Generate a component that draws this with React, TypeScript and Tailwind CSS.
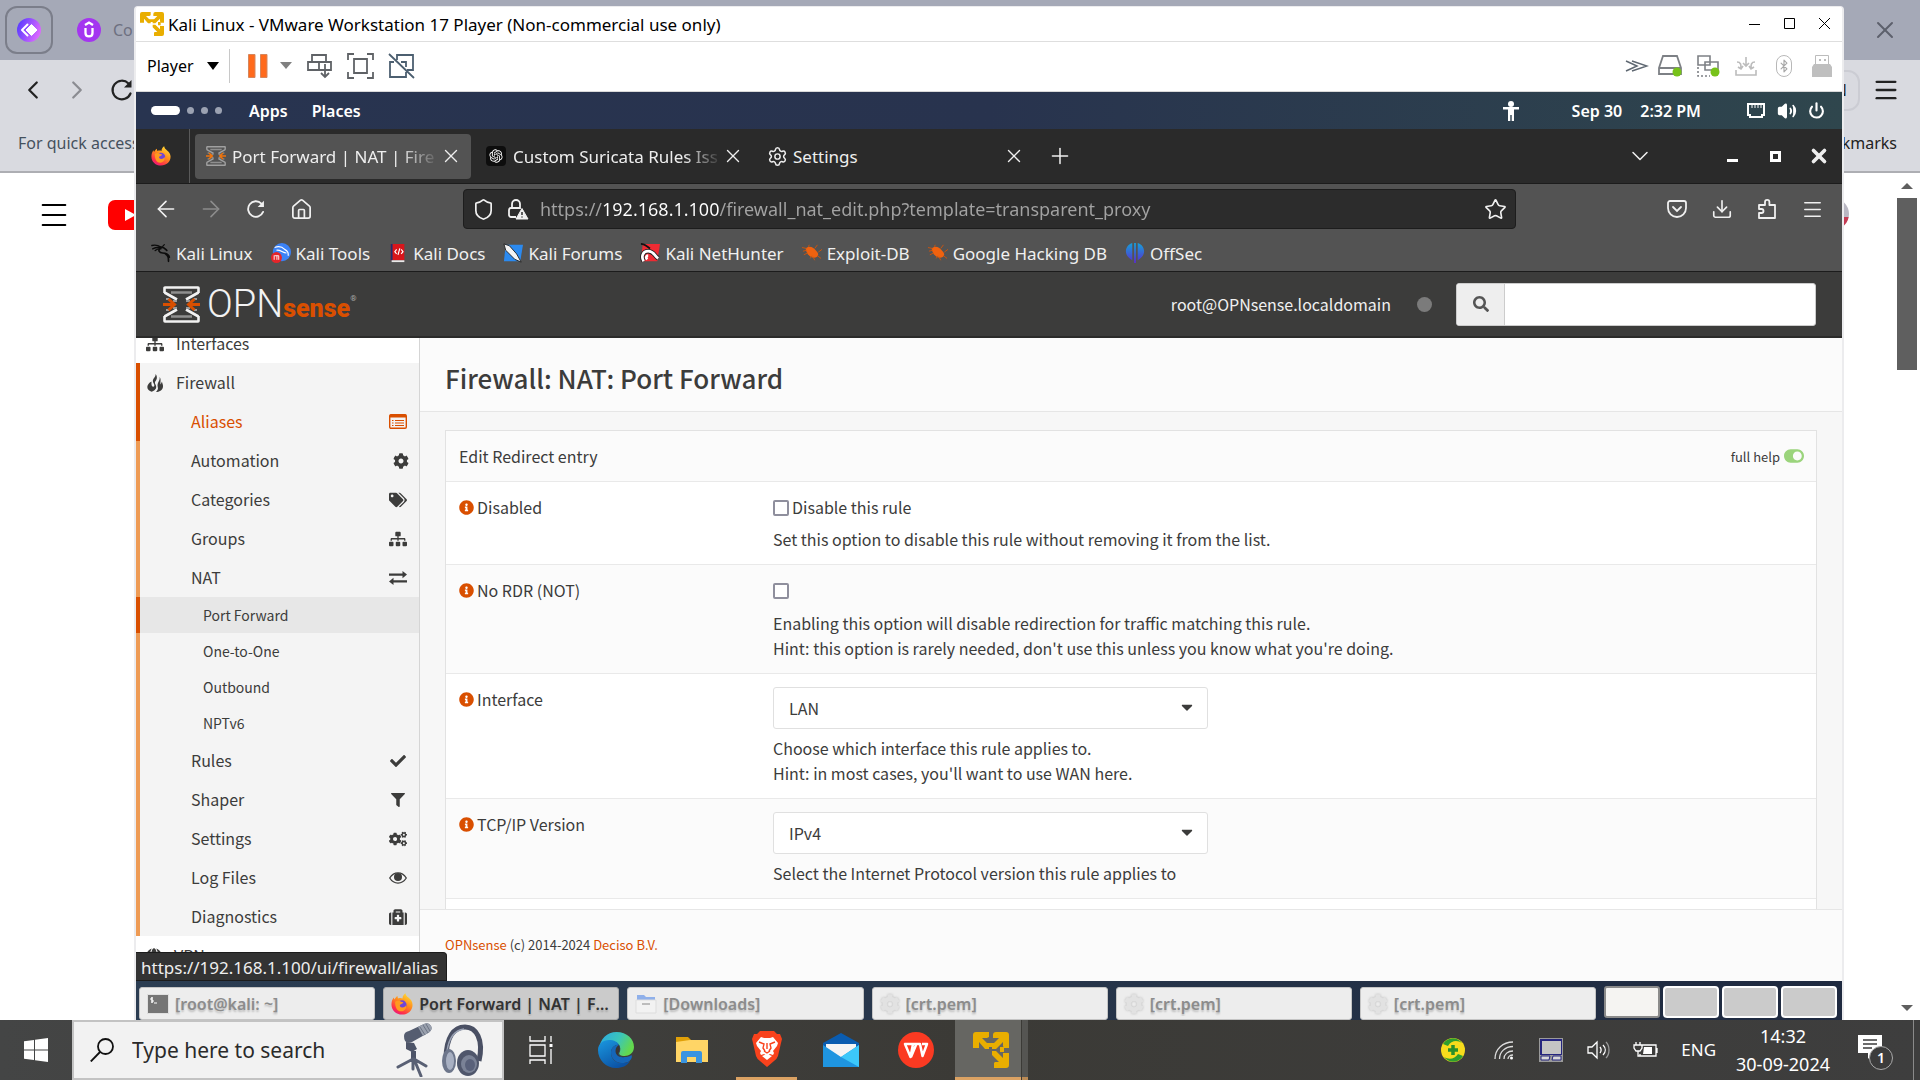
import React from "react";
import {
  FaSitemap, FaCog, FaTags, FaCheck, FaFilter, FaCogs, FaMedkit,
  FaInfoCircle, FaSearch, FaToggleOn, FaCaretDown, FaGlobe,
} from "react-icons/fa";
import { RiOpenaiFill } from "react-icons/ri";
import {
  X, Plus, ChevronDown, ChevronLeft, ChevronRight, ArrowLeft, ArrowRight, Menu,
  Shield, Star, Download, Settings, Power, Volume2, House, Bluetooth,
} from "lucide-react";

/* ---------- drawings ---------- */

function VmwareIcon({ className }: { className?: string }) {
  return (
    <svg viewBox="0 0 36 36" className={className} fill="#e9ae00">
      <path d="M0 3Q0 0 3 0H16V5L14 6H9L16 13V17H12L6 10V16H0z" />
      <path d="M20 3Q20 0 23 0H33Q36 0 36 3V16H31L30 14V10L23 17H19V13L26 6H20z" />
      <path d="M36 33Q36 36 33 36H21V31L22 30H26L19 23V19H23L30 26V21H36z" />
      <path d="M11 11h14v4H11zM27 15h4v5h-4z" />
    </svg>
  );
}

function FirefoxIcon({ className }: { className?: string }) {
  return (
    <svg viewBox="0 0 24 24" className={className}>
      <defs>
        <linearGradient id="ffa" x1="0.8" y1="0" x2="0.2" y2="1">
          <stop offset="0" stopColor="#ffe135" />
          <stop offset="0.45" stopColor="#ff8a1c" />
          <stop offset="0.8" stopColor="#ff2f4b" />
          <stop offset="1" stopColor="#e31587" />
        </linearGradient>
      </defs>
      <path d="M12 23.5C5.500 23.500.5 18.800.5 12.500.500 9.500 1.500 7 3 5l.6 2.200C4.600 5.400 6 4 7 3.300L7.600 6c2-.8 4-.6 5 0C12.500 3.500 14 1.500 15.800.300c.2 2.400 2 3.700 3.500 5 2.500 2 4.200 4.500 4.200 7.700 0 6-5 10.500-11.500 10.500z" fill="url(#ffa)" />
      <circle cx="12" cy="13" r="5" fill="#6e45d8" />
      <path d="M4.500 9.500c2-1.500 5-1.500 6.500 0l2.500.6c-.5 1.600-2.500 1.800-3.500 2.600-1 1 0 3 2.500 3 2 0 3.500-1.200 4-2.700.8 4-2 7-5.500 7-4 0-6.500-3.500-6.500-10.500z" fill="#ff9a1f" />
    </svg>
  );
}

function SenseMark({ className, light }: { className?: string; light?: boolean }) {
  const bar = light ? "#f2f2f2" : "#a0a0a0";
  const arrow = light ? "#d94f00" : "#f0740c";
  return (
    <svg viewBox="0 0 37 37" className={className} fill="none">
      <path d="M1.500 7V2Q1.500 1.500 2 1.500H35Q35.500 1.500 35.500 2V7M1.500 6.500L14 13.500M35.500 6.500L23 13.500" stroke={bar} strokeWidth="2.600" />
      <path d="M1.500 30V35Q1.500 35.500 2 35.500H35Q35.500 35.500 35.500 35V30M1.500 30.500L14 23.500M35.500 30.500L23 23.500" stroke={bar} strokeWidth="2.600" />
      <path d="M8 6.500h21M8 30.500h21" stroke="#8f8f8f" strokeWidth="2.500" />
      <path d="M3 13h3M31 13h3M3 24h3M31 24h3M10 15h4M23 15h4M10 22h4M23 22h4" stroke="#9a9a9a" strokeWidth="2" />
      <path d="M0 18.500h11M5.500 13l6 5.500-6 5.500M37 18.500H26M31.500 13l-6 5.500 6 5.500" stroke={arrow} strokeWidth="3" />
    </svg>
  );
}

function ReloadIcon({ className }: { className?: string }) {
  return (
    <svg viewBox="0 0 24 24" className={className} fill="none" stroke="currentColor" strokeWidth="2.200" strokeLinecap="round">
      <path d="M20.500 15.500A9.300 9.300 0 1118.500 5.500" />
      <path d="M21.500 2v7.500H14z" fill="currentColor" stroke="none" />
    </svg>
  );
}

function KaliDragon({ className, color }: { className?: string; color: string }) {
  return (
    <svg viewBox="0 0 24 24" className={className} fill="none" stroke={color} strokeLinecap="round">
      <path d="M1 3c4-1 8 0 11 2M2 7c4-2 7-2 10-1M5 9c2-2 4-2 7-2" strokeWidth="1.600" />
      <path d="M12 5c4 0 5 2 7 4M11 6c-3 3-1 6 3 6 4 0 7 1 8 5M17 13c4 2 4 5 4 9" strokeWidth="2" />
      <path d="M14 4l2-2" strokeWidth="1.500" />
    </svg>
  );
}

function EdgeIcon({ className }: { className?: string }) {
  return (
    <svg viewBox="0 0 36 36" className={className}>
      <defs>
        <linearGradient id="eda" x1="0" y1="0" x2="1" y2="0.4">
          <stop offset="0" stopColor="#2aa7e8" />
          <stop offset="0.6" stopColor="#3cc6b8" />
          <stop offset="1" stopColor="#63d84e" />
        </linearGradient>
        <linearGradient id="edb" x1="0" y1="0" x2="0.6" y2="1">
          <stop offset="0" stopColor="#1a98e0" />
          <stop offset="1" stopColor="#0b52a4" />
        </linearGradient>
      </defs>
      <path d="M1 17C2 7 9 0 18.500 0 29 0 36 7 36 15c0 6-5 9-9.500 9-4 0-6-1.500-5-3.500C24 16 21 9 13 9 7 9 2 12 1 17z" fill="url(#eda)" />
      <path d="M0 18c0-6 5-10 11-10 5 0 9 2 10 5-4-1-8 3-8 8 0 7 6 10 11 10 4 0 6-1 8-2-3 5-8 7-14 7C8 36 0 28 0 18z" fill="url(#edb)" />
      <path d="M13 21c0-5 4-9 8-8 1.500 3 1 6-.5 8-1 2 1 4 6 4 3 0 5-.5 7-2 1 2 0 4-2 6-2 1.500-5 2-8 2-5 0-10.500-4-10.500-10z" fill="#1566b8" />
      <path d="M21 13c1.500 3 1 6-.5 8-1 2 1 4 6 4-5 1-9-2-9-6 0-3 1.500-5 3.500-6z" fill="#3a3632" />
    </svg>
  );
}

function PemGear() {
  return <FaCog className="size-5 shrink-0 text-[#e2e2e2] drop-shadow-[0_0_1px_#bbb]" />;
}

function CloseX() {
  return <X className="size-[22px]" strokeWidth={1.5} />;
}

/* ---------- host browser behind the VM ---------- */

function HostBrowser() {
  return (
    <div className="flex h-full flex-col bg-white font-['Noto_Sans',sans-serif]">
      <div className="flex h-[60px] items-center justify-between bg-[#a5a9b7] pb-[1px] pl-[5px] pr-[21px]">
        <div className="flex items-center">
          <button aria-label="Pinned tab" className="flex size-12 items-center justify-center rounded-xl border-2 border-[#7b7e8a]">
            <svg viewBox="0 0 24 24" className="size-6">
              <defs>
                <linearGradient id="pin" x1="0" y1="0.3" x2="1" y2="0.7">
                  <stop offset="0" stopColor="#5a3bff" />
                  <stop offset="1" stopColor="#e46bff" />
                </linearGradient>
              </defs>
              <circle cx="12" cy="12" r="12" fill="url(#pin)" />
              <path d="M14.500 6.500L20 12l-5.500 5.500L9 12z" fill="#fff" stroke="#fff" strokeLinejoin="round" />
              <path d="M10.500 6.500L5 12l5.500 5.500" stroke="#fff" strokeWidth="2" fill="none" strokeLinecap="round" strokeLinejoin="round" />
            </svg>
          </button>
          <div className="ml-6 flex items-center gap-3 text-base text-[#6d7080]">
            <svg viewBox="0 0 24 24" className="size-6">
              <circle cx="12" cy="12" r="12" fill="#a435f0" />
              <path d="M8.500 10v5c0 4.500 7 4.500 7 0v-5M8 7l4-2.500L16 7" fill="none" stroke="#fff" strokeWidth="2.300" />
            </svg>
            <span>Co</span>
          </div>
        </div>
        <button aria-label="Close window"><X className="size-7 text-[#5d606c]" strokeWidth={1.7} /></button>
      </div>
      <div className="flex h-[113px] flex-col border-b-2 border-[#adaeb3] bg-[#d9dae0] text-[#45515e]">
        <div className="flex h-[60px] items-center justify-between pl-[18px] pr-[20px] text-[#222]">
          <div className="flex items-center gap-[14px]">
            <button aria-label="Back"><ChevronLeft className="size-[30px]" strokeWidth={1.8} /></button>
            <button aria-label="Forward"><ChevronRight className="size-[30px] text-[#8b8c92]" strokeWidth={1.8} /></button>
            <button aria-label="Reload"><ReloadIcon className="ml-1 size-6" /></button>
          </div>
          <div className="flex items-center gap-3">
            <div className="flex h-[41px] w-14 items-center justify-end rounded-xl border-2 border-[#cbccd3] pr-[11px] text-base">VPN</div>
            <button aria-label="Menu"><Menu className="size-[28px]" strokeWidth={2} /></button>
          </div>
        </div>
        <div className="flex h-[46px] items-center justify-between pl-[18px] pr-[23px] text-base">
          <span>For quick access</span>
          <span className="text-[#222]">All Bookmarks</span>
        </div>
      </div>
      <div className="flex min-h-0 flex-1 justify-between">
        <div className="flex h-[84px] items-center gap-[37px] pl-[37px]">
          <button aria-label="Guide"><Menu className="size-[34px] text-black" strokeWidth={1.4} /></button>
          <svg viewBox="0 0 42 30" className="h-[30px] w-[42px]">
            <rect width="42" height="30" rx="7" fill="#f00" />
            <path d="M17 9l11 6-11 6z" fill="#fff" />
          </svg>
        </div>
        <div className="flex">
          <div className="mr-[47px] mt-[25px] size-8 rounded-full bg-gradient-to-b from-[#b9b7c2] from-60% to-[#c33a52] to-60%" />
          <div className="flex w-[24px] flex-col items-center justify-between bg-white pb-[9px] pr-[3px] pt-[10px]">
            <div className="flex flex-col items-center gap-[9px]">
              <svg viewBox="0 0 12 6" className="h-[6px] w-3"><path d="M0 6l6-6 6 6z" fill="#5f5f5f" /></svg>
              <div className="h-[172px] w-5 bg-[#5f5f5f]" />
            </div>
            <svg viewBox="0 0 12 6" className="h-[6px] w-3"><path d="M0 0l6 6 6-6z" fill="#5f5f5f" /></svg>
          </div>
        </div>
      </div>
    </div>
  );
}

/* ---------- VMware chrome ---------- */

function VmTitleBar() {
  return (
    <div className="flex h-[35px] items-center justify-between border-b border-[#dedede] bg-white pl-1 pr-[11px] font-['Noto_Sans',sans-serif] text-black">
      <div className="flex items-center gap-1">
        <VmwareIcon className="size-6" />
        <span className="pt-[2px] text-[17px]">Kali Linux - VMware Workstation 17 Player (Non-commercial use only)</span>
      </div>
      <div className="flex items-center gap-[23px]">
        <button aria-label="Minimize"><svg viewBox="0 0 12 12" className="size-3"><path d="M0 6.500h11" stroke="#000" /></svg></button>
        <button aria-label="Maximize"><svg viewBox="0 0 12 12" className="size-3"><path d="M.5.500h10v10H.5z" stroke="#000" fill="none" /></svg></button>
        <button aria-label="Close"><svg viewBox="0 0 12 12" className="size-3"><path d="M0 0l11 11M11 0L0 11" stroke="#000" /></svg></button>
      </div>
    </div>
  );
}

function VmMenuBar() {
  return (
    <div className="flex h-[50px] items-center justify-between border-b border-[#d9d9d9] bg-white pb-[2px] pl-[11px] pr-2 font-['Noto_Sans',sans-serif] text-black">
      <div className="flex items-center">
        <button className="flex items-center gap-[13px] text-base">
          Player
          <svg viewBox="0 0 12 8" className="h-2 w-3"><path d="M0 0h12L6 8z" fill="#000" /></svg>
        </button>
        <div className="ml-[10px] h-[34px] w-px bg-[#c8c8c8]" />
        <div className="ml-[18px] flex items-center gap-3">
          <button aria-label="Pause"><svg viewBox="0 0 20 24" className="h-6 w-5"><path d="M.5.500h6.500v23H.5zM12.500.500H19v23h-6.500z" fill="#ff6a1c" stroke="#d5865c" /></svg></button>
          <button aria-label="Power options"><svg viewBox="0 0 12 7" className="h-[7px] w-3"><path d="M0 0h12L6 7z" fill="#808080" /></svg></button>
        </div>
        <div className="ml-[14px] flex items-center gap-[14px] text-[#5f6266]">
          <button aria-label="Send Ctrl+Alt+Del">
            <svg viewBox="0 0 27 26" className="h-[26px] w-[27px]" fill="none" stroke="currentColor" strokeWidth="1.800">
              <path d="M6 9V2h14v7M2 9h23v8H2zM13 9v8M19 11v13M15 20l4 4 4-4" />
            </svg>
          </button>
          <button aria-label="Full screen">
            <svg viewBox="0 0 27 26" className="h-[26px] w-[27px]" fill="none" stroke="currentColor" strokeWidth="1.800">
              <path d="M1 7V1h6M20 1h6v6M26 19v6h-6M7 25H1v-6M7 6h13v14H7z" />
            </svg>
          </button>
          <button aria-label="Unity mode">
            <svg viewBox="0 0 27 26" className="h-[26px] w-[27px]" fill="none" stroke="#4c5f70" strokeWidth="1.800">
              <path d="M9 7V2h16v15h-6M6 9H2v15h16v-5M13 9h5v5M1 1l25 24" />
            </svg>
          </button>
        </div>
      </div>
      <div className="flex items-center gap-[14px]">
        <svg viewBox="0 0 24 12" className="h-3 w-6" fill="none" stroke="#5f6872" strokeWidth="1.500"><path d="M1 1l11 5-11 5M7 1l15 5-15 5" /></svg>
        <svg viewBox="0 0 24 22" className="-ml-[5px] h-[22px] w-6" fill="none" stroke="#7d8085" strokeWidth="1.800">
          <path d="M5 1h14l4 12v6H1v-6zM1 13h22" /><circle cx="19" cy="17" r="4.500" fill="#77c21a" stroke="none" />
        </svg>
        <svg viewBox="0 0 24 22" className="h-[22px] w-6" fill="none" stroke="#7d8085" strokeWidth="1.600">
          <path d="M2 1h12v9H2zM9 7h13v8H9z" fill="#fff" /><path d="M2 12v9h12" strokeDasharray="2 2" /><circle cx="19" cy="17" r="4.500" fill="#77c21a" stroke="none" />
        </svg>
        <svg viewBox="0 0 22 20" className="h-5 w-6" fill="none" stroke="#bcbcbc" strokeWidth="1.600">
          <path d="M11 1v9M8 7l3 3 3-3M2 6c4 0 4 3 4 6M20 6c-4 0-4 3-4 6M3 11l3 2 2-3M19 11l-3 2-2-3M1 14v5h20v-5" />
        </svg>
        <div className="flex w-6 justify-center">
          <div className="flex h-[22px] w-4 items-center justify-center rounded-full border border-[#b8b8b8]"><Bluetooth className="size-[14px] text-[#a8a8a8]" /></div>
        </div>
        <svg viewBox="0 0 22 22" className="h-[22px] w-6"><path d="M4.500.500h13v10h-13z" fill="#fff" stroke="#bcbcbc" /><path d="M8 4h2v2H8zM13 4h2v2h-2z" fill="#bcbcbc" /><path d="M1 12l2-3h16l2 3v10H1z" fill="#bfbfbf" /></svg>
      </div>
    </div>
  );
}

/* ---------- Kali desktop ---------- */

function KaliTopPanel() {
  return (
    <div className="flex h-[37px] items-center justify-between bg-gradient-to-r from-[#283450] via-[#28334e] to-[#2f464d] pl-[15px] pr-[17px] font-['Noto_Sans',sans-serif] text-base font-semibold text-white">
      <div className="flex items-center">
        <div className="flex items-center gap-[7px]">
          <div className="h-[9px] w-[29px] rounded-full bg-white" />
          <div className="size-[7px] rounded-full bg-[#9ba2b2]" />
          <div className="size-[7px] rounded-full bg-[#9ba2b2]" />
          <div className="size-[7px] rounded-full bg-[#9ba2b2]" />
        </div>
        <button className="ml-[27px]">Apps</button>
        <button className="ml-6">Places</button>
      </div>
      <div className="flex items-center">
        <svg viewBox="0 0 16 20" className="h-5 w-4" fill="#fff"><circle cx="8" cy="3" r="3" /><path d="M0 6h16v2.500h-5V20H8.700v-6H7.300v6H5V8.500H0z" /></svg>
        <span className="ml-[53px]">Sep 30</span>
        <span className="ml-[18px]">2:32 PM</span>
        <svg viewBox="0 0 18 16" className="ml-[46px] h-4 w-[18px]" fill="none" stroke="#fff" strokeWidth="2"><path d="M1 1h16v11h-2v2H3v-2H1z" /><path d="M5 2v3M8 2v3M11 2v3M14 2v3" strokeWidth="1" /></svg>
        <Volume2 className="ml-[12px] size-[20px] fill-white" strokeWidth={2} />
        <Power className="ml-[11px] size-[17px]" strokeWidth={3} />
      </div>
    </div>
  );
}

function BrowserTabs() {
  return (
    <div className="flex h-[55px] items-center justify-between border-b border-[#1c1c1c] bg-[#2a2a2a] pr-3 text-[#eee]">
      <div className="flex h-full items-center">
        <div className="flex h-full w-[54px] items-center border-r border-[#5a5a5a] pl-[15px]"><FirefoxIcon className="size-5" /></div>
        <div className="ml-[5px] flex h-[45px] w-[276px] items-center rounded bg-[#535353] pl-[11px] pr-[9px]">
          <SenseMark className="size-5 shrink-0" />
          <span className="ml-[6px] min-w-0 flex-1 whitespace-nowrap pt-[2px] [mask-image:linear-gradient(to_right,black_80%,transparent)]">Port Forward | NAT | Fire</span>
          <button aria-label="Close tab"><CloseX /></button>
        </div>
        <div className="flex h-[45px] w-[282px] items-center pl-[15px] pr-[9px]">
          <span className="flex size-5 shrink-0 items-center justify-center rounded bg-[#0d0d0d]"><RiOpenaiFill className="size-4 text-white" /></span>
          <span className="ml-[7px] min-w-0 flex-1 whitespace-nowrap pt-[2px] [mask-image:linear-gradient(to_right,black_82%,transparent)]">Custom Suricata Rules Iss</span>
          <button aria-label="Close tab"><CloseX /></button>
        </div>
        <div className="flex h-[45px] w-[281px] items-center pl-[14px] pr-[9px]">
          <Settings className="size-[21px] shrink-0" strokeWidth={1.7} />
          <span className="ml-[5px] min-w-0 flex-1 pt-[2px]">Settings</span>
          <button aria-label="Close tab"><CloseX /></button>
        </div>
        <button aria-label="New tab" className="ml-[13px]"><Plus className="size-[26px]" strokeWidth={1.4} /></button>
      </div>
      <div className="flex items-center">
        <button aria-label="List tabs"><ChevronDown className="size-[28px]" strokeWidth={1.3} /></button>
        <button aria-label="Minimize" className="ml-[73px] mt-2 h-[3px] w-[11px] bg-white" />
        <button aria-label="Restore" className="ml-8 h-[11px] w-[11px] border-[3px] border-white" />
        <button aria-label="Close" className="ml-[27px]"><X className="size-[22px]" strokeWidth={4} /></button>
      </div>
    </div>
  );
}

function BrowserToolbar() {
  return (
    <div className="flex h-[50px] items-center justify-between bg-[#535353] pl-[17px] pr-[18px] text-[#f0f0f0]">
      <div className="flex items-center gap-[19px]">
        <button aria-label="Back"><ArrowLeft className="size-[26px]" strokeWidth={1.5} /></button>
        <button aria-label="Forward"><ArrowRight className="size-[26px] text-[#8c8c8c]" strokeWidth={1.5} /></button>
        <button aria-label="Reload" className="flex w-[26px] justify-center"><ReloadIcon className="size-5" /></button>
        <button aria-label="Home" className="flex w-[26px] justify-center"><House className="size-[23px]" strokeWidth={1.8} /></button>
      </div>
      <div className="ml-[149px] mr-[150px] flex h-10 flex-1 items-center rounded border border-[#1d1d1d] bg-[#2c2c2c] px-2">
        <Shield className="size-[23px]" strokeWidth={1.8} />
        <svg viewBox="0 0 22 22" className="ml-3 size-[22px]" fill="none" stroke="#f0f0f0" strokeWidth="1.800">
          <path d="M9 19H4a2 2 0 01-2-2v-5a2 2 0 012-2h9M5 10V6a4 4 0 018 0v5" />
          <path d="M15 10.500l6 10.500H9z" fill="#f0f0f0" strokeWidth="1" strokeLinejoin="round" /><path d="M15 14v3M15 18.500v1" stroke="#2c2c2c" strokeWidth="1.500" />
        </svg>
        <input
          aria-label="Address"
          defaultValue="https://192.168.1.100/firewall_nat_edit.php?template=transparent_proxy"
          className="ml-[11px] min-w-0 flex-1 bg-[linear-gradient(to_right,#a3a3a3_62px,#fff_62px,#fff_179px,#a3a3a3_179px)] bg-clip-text text-lg text-transparent outline-none"
        />
        <button aria-label="Bookmark this page"><Star className="size-[23px]" strokeWidth={1.7} /></button>
      </div>
      <div className="flex items-center gap-[23px]">
        <svg viewBox="0 0 22 22" className="size-[22px]" fill="none" stroke="currentColor" strokeWidth="1.800"><path d="M4 3h14a2 2 0 012 2v5a9 9 0 01-18 0V5a2 2 0 012-2z" /><path d="M7 9l4 4 4-4" strokeLinecap="round" /></svg>
        <Download className="size-[22px]" strokeWidth={1.8} />
        <svg viewBox="0 0 22 22" className="size-[22px]" fill="none" stroke="currentColor" strokeWidth="1.800" strokeLinejoin="round"><path d="M3 7h6V4a2.200 2.200 0 014.400 0v3H19v13H3v-5h2.500a2 2 0 000-4H3z" /></svg>
        <button aria-label="Open application menu"><Menu className="size-[23px]" strokeWidth={1.7} /></button>
      </div>
    </div>
  );
}

function BugIcon() {
  return (
    <svg viewBox="0 0 22 20" className="size-5" fill="#f0620f">
      <path d="M4 5c4-4 9-1 12 3 3 3 2 6-1 7-5 1-10-3-11-10z" />
      <path d="M0 4l5 1M2 12l4-2M7 3l1-2M14 18l-2-4M18 9l4-3M9 16l2-3M14 5l3-4M17 13l4 3M5 7L1 8" stroke="#d0550c" strokeWidth="1" />
    </svg>
  );
}

const bookmarks: { label: string; icon: React.ReactNode }[] = [
  { label: "Kali Linux", icon: <KaliDragon className="size-5" color="#0c0c0c" /> },
  {
    label: "Kali Tools",
    icon: (
      <svg viewBox="0 0 22 22" className="size-5"><circle cx="12" cy="10" r="10" fill="#3b82f6" /><path d="M4 5c5-2 9 0 11 2 4 2 4 4 4 7M6 8c4-1 7 3 11 3" stroke="#fff" fill="none" strokeWidth="1.300" /><circle cx="6" cy="16" r="6" fill="#e5252a" /><path d="M3.500 13.500v5M4 14h4.500v4.500M6.500 14v4.500" stroke="#fff" fill="none" /></svg>
    ),
  },
  {
    label: "Kali Docs",
    icon: (
      <svg viewBox="0 0 20 22" className="size-5"><path d="M2 1h15v18H2z" fill="#d8151b" /><path d="M2 1h2v18H2z" fill="#1d2f6f" /><path d="M3 19h14v2H3z" fill="#e9e9e9" /><path d="M8.500 7l-2 2.500 2 2.500M13.500 7l2 2.500-2 2.500M12 6l-2 7" stroke="#fff" fill="none" strokeWidth="1.300" /></svg>
    ),
  },
  {
    label: "Kali Forums",
    icon: (
      <svg viewBox="0 0 22 22" className="size-5"><path d="M3 2h19l-3 18H1z" fill="#2b8af0" /><path d="M1 1l6 2 8 9 5 9-7-3L3 8z" fill="#f4f4f4" stroke="#222" strokeWidth="1" /></svg>
    ),
  },
  {
    label: "Kali NetHunter",
    icon: (
      <svg viewBox="0 0 22 22" className="size-5"><path d="M3 1h19l-3 19H1z" fill="#ee2b33" /><path d="M4 20c-3-5-1-11 5-11 6 0 7 5 11 8" stroke="#222" strokeWidth="5" fill="none" /><path d="M4 20c-3-5-1-11 5-11 6 0 7 5 11 8M8 18c-2-2-1-4 1-4" stroke="#fff" strokeWidth="3" fill="none" /><path d="M1 1c4 0 7 3 10 5" stroke="#111" strokeWidth="2" fill="none" /></svg>
    ),
  },
  { label: "Exploit-DB", icon: <BugIcon /> },
  { label: "Google Hacking DB", icon: <BugIcon /> },
  {
    label: "OffSec",
    icon: (
      <svg viewBox="0 0 20 22" className="size-5">
        <defs><linearGradient id="off" x1="0" y1="0" x2="0" y2="1"><stop offset="0" stopColor="#15a0d8" /><stop offset="1" stopColor="#5b2bd0" /></linearGradient></defs>
        <path d="M7 0v19C3 17 0 13 0 9s3-8 7-9zM13 0v19c4-2 7-6 7-10s-3-8-7-9zM9 0h2v22H9z" fill="url(#off)" />
      </svg>
    ),
  },
];

function BookmarksBar() {
  return (
    <div className="flex h-[38px] items-center gap-[18px] border-b border-[#1c1c1c] bg-[#535353] pl-[15px] text-[#f0f0f0]">
      {bookmarks.map((b) => (
        <a key={b.label} href="#" className="flex items-center gap-[5px]">
          {b.icon}
          <span className="pt-[3px]">{b.label}</span>
        </a>
      ))}
    </div>
  );
}

/* ---------- OPNsense ---------- */

function FlameIcon() {
  return (
    <svg viewBox="0 0 16 18" className="h-[18px] w-4" fill="#3c3c3b">
      <path d="M8.500 0C9 3 6 4 5.800 7c0 2 2 3 1.500 5-.4 1.200-2 1-2.500-.2C4.300 10.500 4.500 9 4.500 7.500 2 8.500.3 11 .3 13c0 2.500 2 4 4.400 4.700C9.500 16 10 13 8.500 10.500 7.800 9 7.600 8 9 6.500 10.500 4.500 10 1.500 8.500 0z" />
      <path d="M12.500 3c1 3-1.800 5-2 8 0 2 1 3 0 5-.3.8-1 1.500-1.500 2 3 0 6.800-1.500 7-5.500.1-2.500-1-3.500-1-5l-1.500 3C13 8 14.500 5 12.500 3z" />
    </svg>
  );
}

function ListAltIcon() {
  return (
    <svg viewBox="0 0 18 15" className="h-[15px] w-[18px]" fill="none" stroke="currentColor">
      <rect x="0.700" y="0.700" width="16.600" height="13.600" rx="1.300" strokeWidth="1.400" />
      <path d="M1 2h16" strokeWidth="3" />
      <path d="M3 6.500h1.500M3 9h1.500M3 11.500h1.500M6 6.500h9M6 9h9M6 11.500h9" strokeWidth="1.200" />
    </svg>
  );
}

function SwapIcon() {
  return (
    <svg viewBox="0 0 18 14" className="h-[14px] w-[18px]" fill="currentColor"><path d="M0 2.500h13.500V0L18 3.600l-4.500 3.600V4.800H0zM18 9.200H4.500V6.800L0 10.400 4.500 14v-2.500H18z" /></svg>
  );
}

function EyeIcon() {
  return (
    <svg viewBox="0 0 18 12" className="h-3 w-[18px]" fill="none" stroke="currentColor"><path d="M.7 6C5-.8 13-.8 17.300 6 13 12.800 5 12.800.7 6z" strokeWidth="1.300" /><circle cx="9" cy="5" r="4" fill="currentColor" stroke="none" /></svg>
  );
}

type Item = { label: string; icon?: React.ReactNode; state?: "hover" | "active"; sub?: boolean };

const firewallItems: Item[] = [
  { label: "Aliases", icon: <ListAltIcon />, state: "hover" },
  { label: "Automation", icon: <FaCog className="-mr-[2px] size-4" /> },
  { label: "Categories", icon: <FaTags className="size-[18px]" /> },
  { label: "Groups", icon: <FaSitemap className="size-[18px]" /> },
  { label: "NAT", icon: <SwapIcon /> },
  { label: "Port Forward", sub: true, state: "active" },
  { label: "One-to-One", sub: true },
  { label: "Outbound", sub: true },
  { label: "NPTv6", sub: true },
  { label: "Rules", icon: <FaCheck className="mr-[1px] size-4" /> },
  { label: "Shaper", icon: <FaFilter className="mr-[2px] size-[14px]" /> },
  { label: "Settings", icon: <FaCogs className="size-[18px]" /> },
  { label: "Log Files", icon: <EyeIcon /> },
  { label: "Diagnostics", icon: <FaMedkit className="size-[18px]" /> },
];

function Sidebar() {
  return (
    <nav className="flex w-[284px] shrink-0 flex-col overflow-hidden border-r border-[#d5d5d5] bg-white">
      <div className="-mt-[14px]">
        <a href="#" className="flex h-[39px] items-center gap-3 pl-[10px]"><FaSitemap className="size-[18px]" />Interfaces</a>
        <a href="#" className="flex h-[39px] items-center gap-[13px] border-l-4 border-[#d94f00] bg-[#f4f4f4] pl-[7px]"><FlameIcon />Firewall</a>
        {firewallItems.map((it) =>
          it.sub ? (
            <a key={it.label} href="#" className={it.state === "active"
              ? "flex h-9 items-center border-l-4 border-[#d94f00] bg-[#e7e7e7] pl-[63px] text-sm"
              : "flex h-9 items-center border-l-4 border-[#ee9b54] bg-[#f4f4f4] pl-[63px] text-sm"}>{it.label}</a>
          ) : (
            <a key={it.label} href="#" className={it.state === "hover"
              ? "flex h-[39px] items-center justify-between border-l-4 border-[#d94f00] bg-[#f4f4f4] pl-[51px] pr-3 text-[#d94f00]"
              : "flex h-[39px] items-center justify-between border-l-4 border-[#ee9b54] bg-[#f4f4f4] pl-[51px] pr-3"}>{it.label}{it.icon}</a>
          ),
        )}
        <a href="#" className="flex h-[39px] items-center gap-3 pl-[10px]"><FaGlobe className="size-4" />VPN</a>
      </div>
    </nav>
  );
}

function Row({ label, htmlFor, alt, children }: { label: string; htmlFor: string; alt?: boolean; children: React.ReactNode }) {
  return (
    <div className={alt
      ? "grid grid-cols-[327px_1fr] border-b border-[#e9e9e9] bg-[#fbfbfb] pb-3 pt-[13px]"
      : "grid grid-cols-[327px_1fr] border-b border-[#e9e9e9] bg-white pb-3 pt-[13px]"}>
      <label htmlFor={htmlFor} className="flex items-center gap-[3px] self-start pl-[13px]"><FaInfoCircle className="size-[15px] text-[#d94f00]" />{label}</label>
      <div className="flex flex-col gap-[7px]">{children}</div>
    </div>
  );
}

function SelectBox({ id, value }: { id: string; value: string }) {
  return (
    <div className="relative w-[435px]">
      <select id={id} defaultValue={value} className="h-[42px] w-full appearance-none rounded-[3px] border border-[#e0e0e0] bg-white px-[15px]">
        <option>{value}</option>
      </select>
      <FaCaretDown className="pointer-events-none absolute right-3 top-[11px] size-[18px]" />
    </div>
  );
}

function OpnSense() {
  return (
    <div className="relative flex min-h-0 flex-1 flex-col font-['Noto_Sans_CJK_JP',sans-serif] text-base leading-[25px] text-[#3c3c3b]">
      <header className="flex h-[66px] items-center justify-between border-b-2 border-[#2b2b2a] bg-[#3c3c3b] pl-[27px] pr-[26px]">
        <a href="#" aria-label="OPNsense" className="flex items-center">
          <SenseMark light className="size-[37px]" />
          <span className="ml-[7px] font-['Roboto',sans-serif] text-[38px] font-light leading-[37px] text-[#f2f2f2]">OPN</span>
          <span className="self-end font-['Roboto',sans-serif] text-[25px] font-black leading-7 text-[#d94f00]">sense</span>
          <span className="self-start font-['Roboto',sans-serif] text-[8px] text-[#aaa]">®</span>
        </a>
        <div className="flex items-center">
          <span className="text-[#f0f0f0]">root@OPNsense.localdomain</span>
          <span className="ml-[26px] size-[15px] rounded-full bg-[#7b7b7b]" />
          <div className="ml-6 flex h-[43px] w-[360px] overflow-hidden rounded-[3px] border border-[#ccc] bg-white">
            <button aria-label="Search" className="flex w-12 items-center justify-center border-r border-[#ccc] bg-[#eee]"><FaSearch className="size-4 text-[#555]" /></button>
            <input aria-label="Search" className="min-w-0 flex-1 px-3 outline-none" />
          </div>
        </div>
      </header>
      <div className="flex min-h-0 flex-1">
        <Sidebar />
        <div className="flex min-w-0 flex-1 flex-col bg-[#f7f7f7]">
          <div className="flex h-[74px] shrink-0 items-center border-b border-[#e6e6e6] bg-[#fbfbfb] pl-[25px] pt-[6px]">
            <h1 className="text-[26px] font-medium">Firewall: NAT: Port Forward</h1>
          </div>
          <main className="min-h-0 flex-1 overflow-hidden px-[25px] pt-[18px]">
            <form className="border border-[#e2e2e2] bg-white">
              <div className="flex h-[51px] items-center justify-between border-b border-[#e9e9e9] bg-[#fbfbfb] pl-[13px] pr-3">
                <span>Edit Redirect entry</span>
                <span className="flex items-center gap-1 text-[13px]">full help<FaToggleOn className="size-5 text-[#9bd47c]" /></span>
              </div>
              <Row label="Disabled" htmlFor="disabled">
                <label className="flex items-center gap-[3px]"><input id="disabled" type="checkbox" className="size-4 appearance-none rounded-[2px] border-2 border-[#8f8f9d] bg-white" />Disable this rule</label>
                <p>Set this option to disable this rule without removing it from the list.</p>
              </Row>
              <Row label="No RDR (NOT)" htmlFor="nordr" alt>
                <div className="flex h-[26px] items-center"><input id="nordr" type="checkbox" className="size-4 appearance-none rounded-[2px] border-2 border-[#8f8f9d] bg-white" /></div>
                <p>Enabling this option will disable redirection for traffic matching this rule.<br />Hint: this option is rarely needed, don't use this unless you know what you're doing.</p>
              </Row>
              <Row label="Interface" htmlFor="interface">
                <SelectBox id="interface" value="LAN" />
                <p>Choose which interface this rule applies to.<br />Hint: in most cases, you'll want to use WAN here.</p>
              </Row>
              <Row label="TCP/IP Version" htmlFor="ipver" alt>
                <SelectBox id="ipver" value="IPv4" />
                <p>Select the Internet Protocol version this rule applies to</p>
              </Row>
              <div className="h-12 bg-white" />
            </form>
          </main>
          <footer className="flex h-[72px] shrink-0 items-center border-t border-[#e6e6e6] bg-[#fbfbfb] pb-[3px] pl-[25px] text-[13px]">
            <p><a href="#" className="text-[#d94f00]">OPNsense</a> (c) 2014-2024 <a href="#" className="text-[#d94f00]">Deciso B.V.</a></p>
          </footer>
        </div>
      </div>
      <div className="absolute bottom-0 left-0 flex h-[29px] items-center rounded-tr border border-l-0 border-[#1c1c1c] bg-[#333] pl-[5px] pr-2 pt-[2px] font-['Noto_Sans',sans-serif] text-[17px] text-[#eee]">https://192.168.1.100/ui/firewall/alias</div>
    </div>
  );
}

/* ---------- Kali window list ---------- */

const windows: { label: string; icon: React.ReactNode; active?: boolean }[] = [
  { label: "[root@kali: ~]", icon: <svg viewBox="0 0 22 20" className="h-5 w-[22px] shrink-0"><path d="M.5.500h21v19H.5z" fill="#757575" stroke="#e0e0e0" /><path d="M6 4H4v2h2v2H4M5 3v6M7 9h3" stroke="#fff" fill="none" /></svg> },
  { label: "Port Forward | NAT | Firewall", icon: <FirefoxIcon className="size-[22px] shrink-0" />, active: true },
  { label: "[Downloads]", icon: <svg viewBox="0 0 22 20" className="h-5 w-[22px] shrink-0"><path d="M2 1h7l2 2h9v6H2z" fill="#8fb0ea" /><path d="M1 6h20v13H1z" fill="#f2f2f2" stroke="#ddd" /><path d="M7 10h8" stroke="#aaa" strokeWidth="1.500" /></svg> },
  { label: "[crt.pem]", icon: <PemGear /> },
  { label: "[crt.pem]", icon: <PemGear /> },
  { label: "[crt.pem]", icon: <PemGear /> },
];

function KaliBottomPanel() {
  return (
    <div className="flex h-[39px] items-end bg-gradient-to-r from-[#2b3d52] via-[#27364b] to-[#1f2a40] pl-[3px] pr-[5px] font-['Noto_Sans',sans-serif] text-base font-semibold">
      <div className="flex min-w-0 flex-1 gap-2">
        {windows.map((w, i) => (
          <button key={i} className={w.active
            ? "flex h-[33px] min-w-0 flex-1 items-center gap-[6px] rounded-[3px] border border-[#aaa] bg-[#cbcbcb] pl-[7px] pr-2 text-[#333]"
            : "flex h-[33px] min-w-0 flex-1 items-center gap-[6px] rounded-[3px] border border-[#c4c4c4] bg-[#ededed] pl-[7px] pr-2 text-[#8c8c8c]"}>
            {w.icon}
            <span className="truncate [text-shadow:0_2px_2px_rgba(0,0,0,0.2)]">{w.label}</span>
          </button>
        ))}
      </div>
      <div className="ml-2 flex gap-[3px] pb-[2px]">
        <button aria-label="Workspace 1" className="h-8 w-14 rounded-[3px] border-2 border-[#8b8b8b] bg-[#f5f4f2]" />
        <button aria-label="Workspace 2" className="h-8 w-14 rounded-[4px] border-2 border-white bg-[#cbcbcb]" />
        <button aria-label="Workspace 3" className="h-8 w-14 rounded-[4px] border-2 border-white bg-[#cbcbcb]" />
        <button aria-label="Workspace 4" className="h-8 w-14 rounded-[4px] border-2 border-white bg-[#cbcbcb]" />
      </div>
    </div>
  );
}

/* ---------- Windows taskbar ---------- */

function Taskbar() {
  return (
    <div className="flex h-[60px] shrink-0 items-center justify-between bg-gradient-to-r from-[#444545] via-[#3b3a36] to-[#3e3e3e] font-['Noto_Sans',sans-serif] text-white">
      <div className="flex h-full items-center">
        <button aria-label="Start" className="flex h-full w-[72px] items-center justify-center">
          <svg viewBox="0 0 24 24" className="size-6" fill="#fff"><path d="M0 3.300L10 2v9.500H0zM11 1.800L24 0v11.500H11zM0 12.500h10V22L0 20.700zM11 12.500h13V24l-13-1.800z" /></svg>
        </button>
        <div className="flex h-full w-[432px] items-center border-2 border-[#c3c3c3] bg-[#f2f2f2] px-4 text-[#222]">
          <svg viewBox="0 0 24 24" className="size-6" fill="none" stroke="#111" strokeWidth="1.800"><circle cx="15.500" cy="8.500" r="7.500" /><path d="M10 14L.8 23.500" /></svg>
          <input aria-label="Search" placeholder="Type here to search" className="ml-[18px] min-w-0 flex-1 bg-transparent pt-[2px] text-[21px] outline-none placeholder:text-[#2a2a2a] placeholder:opacity-100" />
          <svg viewBox="0 0 90 54" className="h-[54px] w-[90px]">
            <path d="M8 13q0-4 5-5L28 1q5-2 7 2t-3 7l-16 9q-8 3-8-6z" fill="#555d70" />
            <path d="M22 4l6-3q5-2 7 2t-3 7l-5 3z" fill="#9aa1ae" />
            <path d="M24 4l5 8M27 2l5 8M30 1l4 7" stroke="#6c7484" strokeWidth="1" />
            <path d="M10 19l8 1 3 6-5 3-6-3zM15 28h5v10h-5z" fill="#4d5468" />
            <path d="M17 36L2 44M18 36l12 7M18 36l7 17M17 36v10" stroke="#596074" strokeWidth="3" strokeLinecap="round" />
            <path d="M50 36C50 14 58 4 69 4s19 12 14 34" fill="none" stroke="#4a5064" strokeWidth="5" />
            <path d="M51 28c2-13 8-21 17-22" fill="none" stroke="#9ba3b5" strokeWidth="1.500" />
            <ellipse cx="53" cy="38" rx="7" ry="12" fill="#6d768b" />
            <ellipse cx="54" cy="38" rx="4" ry="9" fill="#a8b0c2" />
            <ellipse cx="72" cy="40" rx="11" ry="13" fill="#4f566b" />
            <ellipse cx="73" cy="41" rx="8" ry="9" fill="#7a8296" />
            <ellipse cx="74" cy="42" rx="5" ry="6" fill="#59617a" />
          </svg>
        </div>
        <button aria-label="Task View" className="flex w-[74px] items-center justify-center">
          <svg viewBox="0 0 24 28" className="h-7 w-6" fill="none" stroke="#fff" strokeWidth="1.300"><path d="M1 0v5h15V0M1 9h15v11H1zM1 28v-4h15v4M22 0v6M22 13v15" /><path d="M20.500 9.500h3" strokeWidth="3" /></svg>
        </button>
        <button aria-label="Edge" className="flex h-full w-[76px] items-center justify-center"><EdgeIcon className="size-9" /></button>
        <button aria-label="File Explorer" className="flex h-full w-[75px] items-center justify-center">
          <svg viewBox="0 0 32 26" className="h-[26px] w-8"><path d="M0 0h12l3 3v4H0z" fill="#e0a008" /><path d="M0 5l14-2h18v22H0z" fill="#ffd566" /><path d="M5 26V16q0-2 2-2h17q2 0 2 2v10h-6v-6h-9v6z" fill="#3a94e0" /></svg>
        </button>
        <button aria-label="Brave" className="ml-[7px] flex h-full w-[61px] flex-col items-center justify-between pt-[11px]">
          <svg viewBox="0 0 30 36" className="h-9 w-[30px]">
            <path d="M8 0h14l3 3h3l2 5-1 4-3 13q-1 3-4 5l-7 6-7-6q-3-2-4-5L1 12 0 8l2-5h3z" fill="#f9421c" />
            <path d="M9 6l3 1h6l3-1 5 6-1 3-4 5 1 2-1 2-3-1-3 2-3-2-3 1-1-2 1-2-4-5-1-3z" fill="#fff" />
            <path d="M7 11l5 2-1 4 2 3M23 11l-5 2 1 4-2 3M15 12v6M12 20l3 2 3-2" stroke="#f9421c" fill="none" strokeWidth="1.400" />
            <path d="M10 25l5-2 5 2-5 4z" fill="#fff" />
          </svg>
          <span className="h-[3px] w-full bg-[#dba263]" />
        </button>
        <button aria-label="Mail" className="flex h-full w-[88px] items-center justify-center">
          <svg viewBox="0 0 36 34" className="h-[34px] w-9"><path d="M0 10L18 0l18 10v6H0z" fill="#0a5cb0" /><path d="M3 11h30v9L18 26 3 20z" fill="#f4f4f4" /><path d="M0 12l18 12 18-12v22H0z" fill="#1f95e0" /><path d="M36 12v22L18 24z" fill="#3cc8fa" /></svg>
        </button>
        <button aria-label="WPS Office" className="flex h-full w-[62px] items-center justify-center">
          <svg viewBox="0 0 36 36" className="size-9"><circle cx="18" cy="18" r="18" fill="#fb3a22" /><path d="M7 12h8l-2.500 13zM14 12h8l2.500 12L29 12h-5M13 25l5-12" fill="none" stroke="#fff" strokeWidth="2.500" strokeLinejoin="round" /></svg>
        </button>
        <button aria-label="VMware" className="ml-2 flex h-full w-[66px] flex-col items-center justify-between bg-[#666662] pt-3">
          <VmwareIcon className="ml-[6px] size-9" />
          <span className="h-[3px] w-full bg-[#dba263]" />
        </button>
        <span className="ml-px flex h-full w-[6px] flex-col justify-end bg-[#555552]"><span className="h-[3px] bg-[#b98a55]" /></span>
      </div>
      <div className="flex h-full items-center">
        <svg viewBox="0 0 24 24" className="size-6"><circle cx="12" cy="12" r="12" fill="#f7dc1c" /><path d="M2 6C6-1 16-2 21 5 17 2 10 2 7 8zM22 18c-4 7-14 8-19 1 5 3 11 2 14-3z" fill="#2e9e2e" /><path d="M12 7v10M7 12h10" stroke="#2a8f2a" strokeWidth="3.500" /></svg>
        <svg viewBox="0 0 20 20" className="ml-[29px] size-5" fill="none" stroke="#ddd" strokeWidth="1.300"><path d="M1 19C1 9 9 2 19 2M5.500 19C5.500 12 11 6.500 19 6.500M10 19c0-5 4-8 9-8M14 19c0-2 2-4 5-4" /><circle cx="17.500" cy="18" r="1.500" fill="#fff" stroke="none" /></svg>
        <svg viewBox="0 0 24 24" className="ml-[25px] size-6"><path d="M0 0h24v24H0z" fill="#9a9a9a" /><path d="M1 1h22v16H1z" fill="#25257f" /><path d="M3 3h19v13H3z" fill="#c4c4c4" /><path d="M2 18h9l-1 4H2zM14 18h8v4h-9z" fill="#d9d9d9" stroke="#25257f" /></svg>
        <svg viewBox="0 0 24 20" className="ml-6 h-5 w-6" fill="none" stroke="#fff" strokeWidth="1.300"><path d="M1 7h4l5-5v16l-5-5H1z" /><path d="M13 7c1.500 2 1.500 4 0 6M16 5c3 3 3 7 0 10" /><path d="M19 2c4 4 4 12 0 16" stroke="#999" /></svg>
        <svg viewBox="0 0 26 18" className="ml-[22px] h-[18px] w-[26px]" fill="none" stroke="#fff" strokeWidth="1.300"><path d="M7 13v2h16V4H9M24 7v5M3 1v3M7 1v3M1 4h8v3l-2 3H3L1 7zM5 10v5h3" /><path d="M11 6h8v7h-9z" fill="#fff" stroke="none" /></svg>
        <span className="ml-[22px] text-[17px]">ENG</span>
        <div className="ml-5 flex flex-col items-center text-lg leading-7"><span>14:32</span><span>30-09-2024</span></div>
        <div className="relative ml-7 mr-[31px] mt-[-6px]">
          <svg viewBox="0 0 24 24" className="size-6"><path d="M0 0h24v18h-9l-5 6v-6H0z" fill="#fff" /><path d="M5 5h14M5 9h14M5 13h9" stroke="#3c3c3c" strokeWidth="1.500" /></svg>
          <span className="absolute left-[11px] top-[11px] flex size-6 items-center justify-center rounded-full border border-[#aaa] bg-[#3c3c3c] text-sm font-semibold">1</span>
        </div>
        <div className="mr-[6px] h-full w-px bg-[#8a8a8a]" />
      </div>
    </div>
  );
}

export default function App() {
  return (
    <div className="flex h-screen flex-col overflow-hidden">
      <div className="relative min-h-0 flex-1">
        <HostBrowser />
        <section aria-label="Kali Linux virtual machine" className="absolute bottom-0 left-[134px] right-[76px] top-[6px] flex flex-col overflow-hidden rounded-t border-x-2 border-t border-[#ececee] bg-white">
          <VmTitleBar />
          <VmMenuBar />
          <KaliTopPanel />
          <div className="font-['Noto_Sans',sans-serif] text-[17px]">
            <BrowserTabs />
            <BrowserToolbar />
            <BookmarksBar />
          </div>
          <OpnSense />
          <KaliBottomPanel />
        </section>
      </div>
      <Taskbar />
    </div>
  );
}
